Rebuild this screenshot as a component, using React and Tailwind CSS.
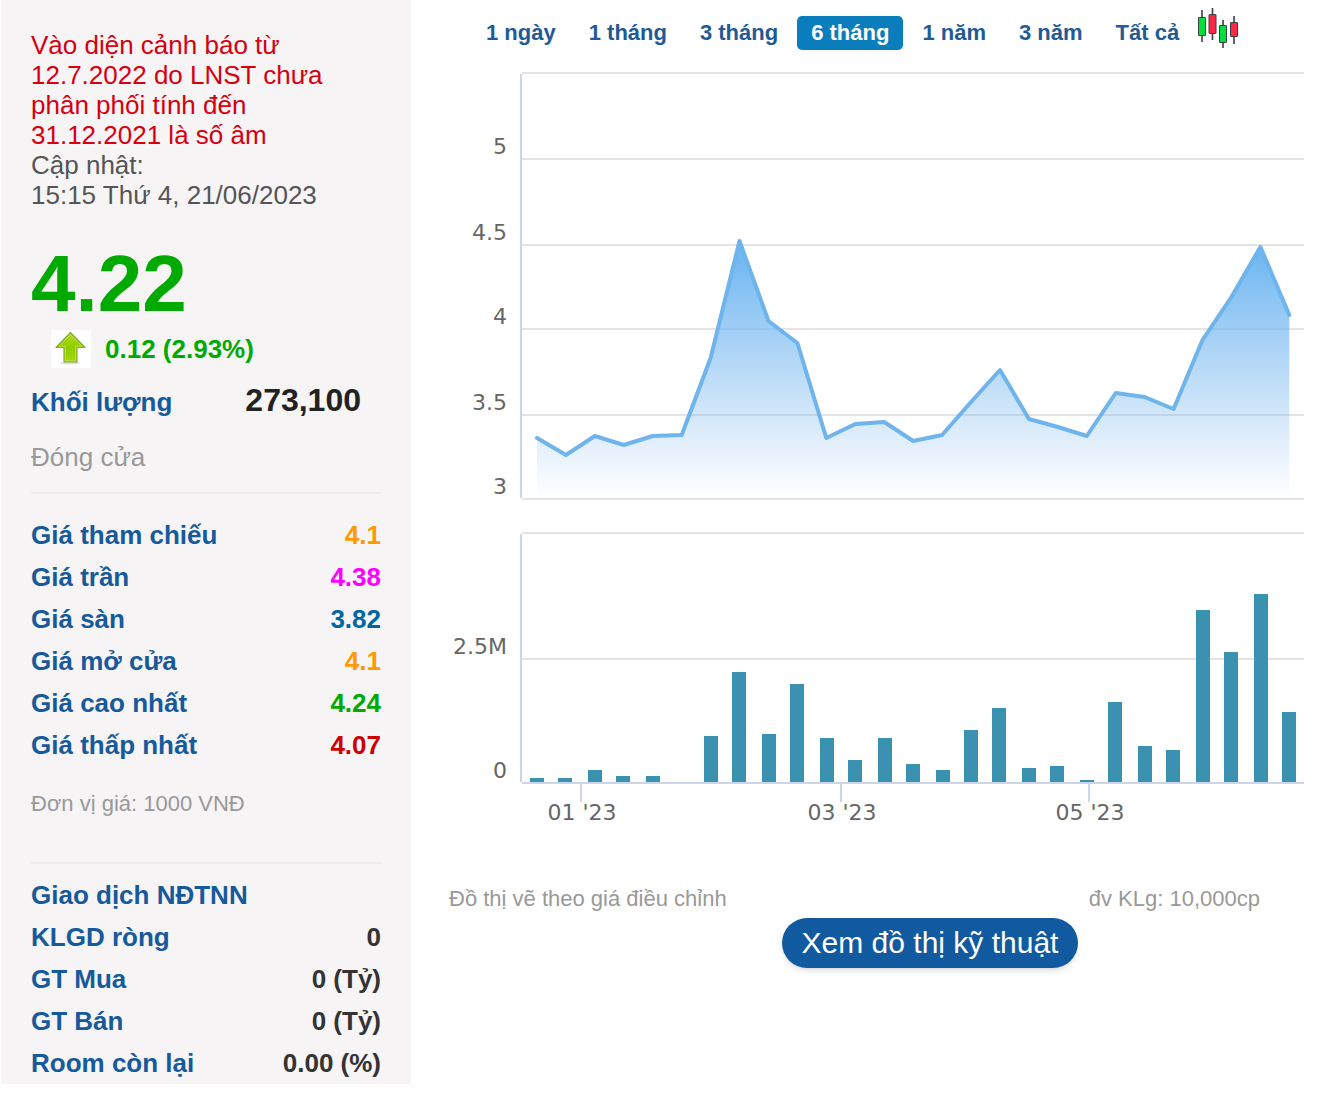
import { useState } from "react";

const ranges = ["1 ngày", "1 tháng", "3 tháng", "6 tháng", "1 năm", "3 năm", "Tất cả"];

const prices = [
  { label: "Giá tham chiếu", value: "4.1", color: "text-[#ff9900]" },
  { label: "Giá trần", value: "4.38", color: "text-[#ff00ff]" },
  { label: "Giá sàn", value: "3.82", color: "text-[#0066a1]" },
  { label: "Giá mở cửa", value: "4.1", color: "text-[#ff9900]" },
  { label: "Giá cao nhất", value: "4.24", color: "text-[#00aa00]" },
  { label: "Giá thấp nhất", value: "4.07", color: "text-[#cc0000]" },
];

const foreign = [
  { label: "KLGD ròng", value: "0", color: "text-[#333333]" },
  { label: "GT Mua", value: "0 (Tỷ)", color: "text-[#333333]" },
  { label: "GT Bán", value: "0 (Tỷ)", color: "text-[#333333]" },
  { label: "Room còn lại", value: "0.00 (%)", color: "text-[#333333]" },
];

// chart geometry, in viewBox units
const START = 88;
const STEP = 28.935;
const PRICE_BASE = 438;
const VOLUME_BASE = 722;

const priceY = [
  378, 395, 376, 385, 376, 375, 298, 181, 261, 283, 378, 364, 362, 381, 375,
  342, 310, 359, 367, 376, 333, 337, 349, 280, 237, 187, 255,
];
const volumes = [
  4, 4, 12, 6, 6, 0, 46, 110, 48, 98, 44, 22, 44, 18, 12, 52, 74, 14, 16, 2,
  80, 36, 32, 172, 130, 188, 70,
];

const priceTicks = [
  { y: 13 },
  { y: 99, label: "5" },
  { y: 185, label: "4.5" },
  { y: 269, label: "4" },
  { y: 355, label: "3.5" },
  { y: 439, label: "3" },
];
const months = [
  { x: 132, label: "01 '23" },
  { x: 392, label: "03 '23" },
  { x: 640, label: "05 '23" },
];

function InfoTable({ title, rows }) {
  return (
    <table className="w-full text-[26px] leading-[42px] font-bold">
      {title && (
        <caption className="text-left text-[#175a9b]">{title}</caption>
      )}
      <tbody>
        {rows.map((row) => (
          <tr key={row.label}>
            <th scope="row" className="p-0 text-left text-[#175a9b]">
              {row.label}
            </th>
            <td className={`p-0 text-right ${row.color}`}>{row.value}</td>
          </tr>
        ))}
      </tbody>
    </table>
  );
}

function UpArrow() {
  return (
    <svg viewBox="0 0 40 38" className="h-[38px] w-10 bg-white" aria-hidden="true">
      <defs>
        <linearGradient id="arrow" x1="0" y1="0" x2="0" y2="1">
          <stop offset="0" stopColor="#b4e01e" />
          <stop offset="0.5" stopColor="#8fcc00" />
          <stop offset="1" stopColor="#a4d80c" />
        </linearGradient>
      </defs>
      <ellipse cx="19" cy="33" rx="10" ry="1.5" fill="#dedede" />
      <path
        d="M19.5 2.5 L34 17.5 H26 V32 H13 V17.5 H5 Z"
        fill="url(#arrow)"
        stroke="#86a83a"
        strokeWidth="1.2"
        strokeLinejoin="round"
      />
      <path
        d="M14.3 30.7 V16.3 H8 L19.5 4.5 L31 16.3 H24.7 V30.7 Z"
        fill="none"
        stroke="#b9e340"
        strokeWidth="1"
      />
    </svg>
  );
}

function Candles() {
  const sticks = [
    { x: 0.5, top: 2, bottom: 34, y: 9.5, h: 18, fill: "#00e03c" },
    { x: 11, top: 0, bottom: 32, y: 6.5, h: 19, fill: "#fb2943" },
    { x: 21.5, top: 12, bottom: 40, y: 17.5, h: 17, fill: "#00e03c" },
    { x: 32.5, top: 8, bottom: 36, y: 14.5, h: 14, fill: "#fb2943" },
  ];
  return (
    <svg viewBox="0 0 42 40" className="h-10 w-[42px]" aria-hidden="true">
      {sticks.map((s) => (
        <g key={s.x} stroke="#3a3f45">
          <line x1={s.x + 3.5} x2={s.x + 3.5} y1={s.top} y2={s.bottom} strokeWidth="1.6" />
          <rect x={s.x} y={s.y} width="7" height={s.h} rx="0.5" fill={s.fill} />
        </g>
      ))}
    </svg>
  );
}

function StockChart() {
  const points = priceY.map((y, i) => `${(START + i * STEP).toFixed(1)},${y}`);
  const lastX = (START + (priceY.length - 1) * STEP).toFixed(1);

  return (
    <svg
      viewBox="0 0 855 770"
      className="block w-full font-['DejaVu_Sans',sans-serif] text-[22px]"
      role="img"
      aria-label="6 tháng"
    >
      <defs>
        <linearGradient id="area" gradientUnits="userSpaceOnUse" x1="0" y1="181" x2="0" y2="438">
          <stop offset="0" stopColor="#66b4f2" />
          <stop offset="1" stopColor="#7cb5ec" stopOpacity="0" />
        </linearGradient>
      </defs>

      {/* Price */}
      {priceTicks.map((t) => (
        <g key={t.y}>
          <line x1="73" x2="855" y1={t.y} y2={t.y} stroke="#e4e4e4" strokeWidth="2" />
          {t.label && (
            <text x="58" y={t.y - 5} textAnchor="end" fill="#666666">
              {t.label}
            </text>
          )}
        </g>
      ))}
      <line x1="72" x2="72" y1="14" y2="438" stroke="#ccd6eb" strokeWidth="2" />
      <polygon
        points={`${START},${PRICE_BASE} ${points.join(" ")} ${lastX},${PRICE_BASE}`}
        fill="url(#area)"
      />
      <polyline
        points={points.join(" ")}
        fill="none"
        stroke="#6fb4ec"
        strokeWidth="4"
        strokeLinejoin="round"
        strokeLinecap="round"
      />

      {/* Volume */}
      <line x1="73" x2="855" y1="473" y2="473" stroke="#e4e4e4" strokeWidth="2" />
      <line x1="73" x2="855" y1="599" y2="599" stroke="#e4e4e4" strokeWidth="2" />
      <text x="58" y="594" textAnchor="end" fill="#666666">
        2.5M
      </text>
      <text x="58" y="718" textAnchor="end" fill="#666666">
        0
      </text>
      <line x1="72" x2="72" y1="474" y2="722" stroke="#ccd6eb" strokeWidth="2" />
      {volumes.map((v, i) => (
        <rect
          key={i}
          x={81 + Math.round((i * STEP) / 2) * 2}
          y={VOLUME_BASE - v}
          width="14"
          height={v}
          fill="#3b91b0"
        />
      ))}
      <line x1="73" x2="855" y1="723" y2="723" stroke="#ccd6eb" strokeWidth="2" />

      {months.map((m) => (
        <g key={m.label}>
          <line x1={m.x} x2={m.x} y1="724" y2="742" stroke="#ccd6eb" strokeWidth="2" />
          <text x={m.x + 1} y="760" textAnchor="middle" fill="#666666">
            {m.label}
          </text>
        </g>
      ))}
    </svg>
  );
}

export default function App() {
  const [range, setRange] = useState("6 tháng");

  return (
    <div className="flex items-start bg-white font-['Liberation_Sans',Arial,sans-serif]">
      {/* Left: quote summary */}
      <aside className="ml-px w-[410px] shrink-0 bg-[#f6f4f5] px-[30px] pt-[30px]">
        <div className="text-[26px] leading-[30px] text-[#555555]">
          <p className="text-[#d6000f]">
            Vào diện cảnh báo từ 12.7.2022 do LNST chưa phân phối tính đến
            31.12.2021 là số âm
          </p>
          <p>Cập nhật:</p>
          <p>15:15 Thứ 4, 21/06/2023</p>
        </div>

        <div className="pt-[34px] font-bold text-[#00aa00]">
          <p className="text-[80px] leading-[80px]">4.22</p>
          <div className="mt-1.5 flex items-center gap-3.5 pl-5 text-[26px] leading-[38px]">
            <UpArrow />
            <span>0.12 (2.93%)</span>
          </div>
        </div>

        <div className="mt-3 flex items-baseline justify-between pr-5 text-[26px] leading-10 font-bold">
          <span className="text-[#175a9b]">Khối lượng</span>
          <span className="text-[32px] text-[#222222]">273,100</span>
        </div>

        <p className="my-5 text-[26px] leading-[30px] text-[#999999]">Đóng cửa</p>

        <div className="border-t-2 border-[#ececec] pt-5">
          <InfoTable rows={prices} />
          <p className="pt-6 pb-11 text-[22px] leading-7 text-[#999999]">
            Đơn vị giá: 1000 VNĐ
          </p>
        </div>

        <div className="border-t-2 border-[#ececec] pt-2.5">
          <InfoTable title="Giao dịch NĐTNN" rows={foreign} />
        </div>
      </aside>

      {/* Right: chart */}
      <main className="min-w-0 flex-1 pr-3.5 pl-[38px]">
        <div className="flex h-[60px] items-start gap-[5px] pl-[23px] text-[22px] leading-[34px] font-bold">
          {ranges.map((r) => (
            <button
              key={r}
              type="button"
              onClick={() => setRange(r)}
              className={`mt-4 rounded-[5px] px-3.5 whitespace-nowrap ${
                r === range ? "bg-[#0a7ebd] text-white" : "text-[#225a96]"
              }`}
            >
              {r}
            </button>
          ))}
          <a href="#candles" aria-label="Xem đồ thị kỹ thuật" className="mt-2">
            <Candles />
          </a>
        </div>

        <StockChart />

        <div className="flex justify-between pt-[54px] pr-11 text-[22px] leading-[30px] text-[#999999]">
          <span>Đồ thị vẽ theo giá điều chỉnh</span>
          <span>đv KLg: 10,000cp</span>
        </div>

        <div className="flex justify-center pt-1 pl-[107px]">
          <a
            href="#technical"
            className="rounded-full bg-[#115a9f] px-5 text-[30px] leading-[50px] whitespace-nowrap text-white shadow-md"
          >
            Xem đồ thị kỹ thuật
          </a>
        </div>
      </main>
    </div>
  );
}
